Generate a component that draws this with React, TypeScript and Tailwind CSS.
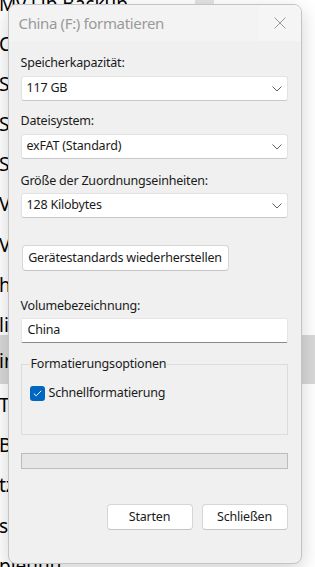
import React, { useState } from "react";

const bgRows = ["C", "S", "S", "Sy", "V", "V", "h", "li", "in", "TD", "B", "tz", "st", "pieuuu"];

function Chevron() {
  return (
    <svg width="10" height="6" viewBox="0 0 10 6" fill="none" className="shrink-0">
      <path d="M0.5 0.5 L5 5 L9.5 0.5" stroke="#5f5f5f" strokeWidth="1" />
    </svg>
  );
}

function Combo({ value }: { value: string }) {
  return (
    <div className="flex items-center justify-between h-[25px] bg-white border border-[#e2e2e2] border-b-[#c8c8c8] rounded-[3px] pl-[5px] pr-[5px] text-[#1a1a1a]">
      <span>{value}</span>
      <Chevron />
    </div>
  );
}

export default function App() {
  const [quick, setQuick] = useState(true);

  return (
    <div
      className="relative w-[315px] h-[567px] overflow-hidden bg-white"
      style={{ fontFamily: '"Noto Sans", "Segoe UI", sans-serif' }}
    >
      {/* Explorer-Liste im Hintergrund */}
      <div className="flex flex-col -mt-[16px] text-[19px] text-black leading-none">
        <div className="flex items-center h-[40px]">
          <span className="-ml-[1px] w-[196px]">My Lib Backup</span>
          <span className="self-start mt-[16px] w-[19px] h-[6px] bg-[#e3e3e3]" />
        </div>
        {bgRows.map((r, i) =>
          r === "in" ? (
            <div key={i} className="flex items-center h-[49px] -mt-[11px] mb-[2px] bg-[#d9d9d9] pt-[5px]">
              <span className="-ml-[1px]">{r}</span>
            </div>
          ) : (
            <div key={i} className="flex items-center h-[40.2px]">
              <span className="-ml-[1px]">{r}</span>
            </div>
          )
        )}
      </div>

      {/* Formatieren-Dialog */}
      <div className="absolute left-[7.5px] top-[4px] w-[294px] h-[560px] flex flex-col bg-[#f0f0f0] border border-[#c4c4c4] rounded-[8px] shadow-[0_6px_20px_rgba(0,0,0,0.18)] overflow-hidden">
        <div className="flex items-center justify-between h-[36px] shrink-0 bg-[#f3f3f3]">
          <span className="pl-[10px] text-[15px] tracking-[-0.35px] text-[#9a9a9a]">China (F:) formatieren</span>
          <div className="flex items-center justify-center w-[42px] h-full bg-[#f5f5f5]">
            <svg width="12" height="12" viewBox="0 0 12 12" fill="none">
              <path d="M0.5 0.5 L11.5 11.5 M11.5 0.5 L0.5 11.5" stroke="#9a9a9a" strokeWidth="1" />
            </svg>
          </div>
        </div>

        <div className="flex flex-col px-[12px] pr-[13px] text-[12.5px] tracking-[-0.2px] text-[#1a1a1a]">
          <label className="mt-[13px] h-[18px] leading-[18px]">Speicherkapazität:</label>
          <div className="mt-[4px]">
            <Combo value="117 GB" />
          </div>

          <label className="mt-[11px] h-[18px] leading-[18px]">Dateisystem:</label>
          <div className="mt-[4px]">
            <Combo value="exFAT (Standard)" />
          </div>

          <label className="mt-[13px] h-[18px] leading-[18px]">Größe der Zuordnungseinheiten:</label>
          <div className="mt-[3px]">
            <Combo value="128 Kilobytes" />
          </div>

          <button className="self-start mt-[27px] ml-[1px] h-[26px] w-[207px] bg-white border border-[#d6d6d6] border-b-[#c4c4c4] rounded-[4px] tracking-[-0.2px]">
            Gerätestandards wiederherstellen
          </button>

          <label className="mt-[26px] h-[18px] leading-[18px]">Volumebezeichnung:</label>
          <div className="mt-[3px] flex items-center h-[25px] bg-white border border-[#e6e6e6] border-b-[#8a8a8a] rounded-[2px] pl-[6px]">
            China
          </div>

          <fieldset className="mt-[12px] h-[80px] border border-[#dcdcdc] px-[8px]">
            <legend className="px-[1px] h-[18px] leading-[18px]">Formatierungsoptionen</legend>
            <label className="flex items-center gap-[4px] mt-[12px] h-[16px]" onClick={() => setQuick(!quick)}>
              <span className="flex items-center justify-center w-[15px] h-[15px] rounded-[3px] bg-[#0067c0]">
                {quick && (
                  <svg width="9" height="7" viewBox="0 0 9 7" fill="none">
                    <path d="M0.8 3.6 L3.2 5.8 L8.2 0.8" stroke="white" strokeWidth="1" />
                  </svg>
                )}
              </span>
              <span>Schnellformatierung</span>
            </label>
          </fieldset>

          <div className="mt-[18px] h-[16px] bg-[#e6e6e6] border border-[#bcbcbc]" />

          <div className="flex justify-end gap-[9px] mt-[35px]">
            <button className="w-[86px] h-[26px] bg-white border border-[#d6d6d6] border-b-[#c4c4c4] rounded-[4px] tracking-[-0.2px]">
              Starten
            </button>
            <button className="w-[86px] h-[26px] bg-white border border-[#d6d6d6] border-b-[#c4c4c4] rounded-[4px] tracking-[-0.2px]">
              Schließen
            </button>
          </div>
        </div>
      </div>
    </div>
  );
}
